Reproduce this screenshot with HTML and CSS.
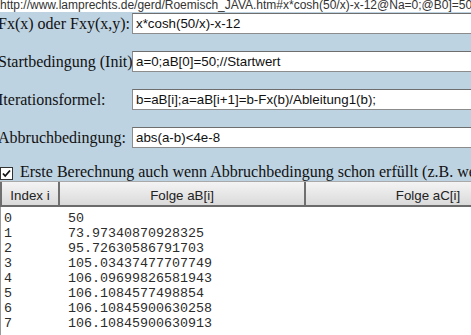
FILE: index.html
```html
<!DOCTYPE html>
<html>
<head>
<meta name="viewport" content="width=device-width, initial-scale=1">
<link rel="stylesheet" href="styles.css">
</head>
<body>
<div class="url">http://www.lamprechts.de/gerd/Roemisch_JAVA.htm#x*cosh(50/x)-x-12@Na=0;@B0]=50;@Iter</div>

<div class="panel">
  <div class="form">
    <label class="lbl">Fx(x) oder Fxy(x,y):</label>
    <input class="fld" type="text" value="x*cosh(50/x)-x-12">

    <label class="lbl">Startbedingung (Init)</label>
    <input class="fld" type="text" value="a=0;aB[0]=50;//Startwert">

    <label class="lbl">Iterationsformel:</label>
    <input class="fld" type="text" value="b=aB[i];a=aB[i+1]=b-Fx(b)/Ableitung1(b);">

    <label class="lbl">Abbruchbedingung:</label>
    <input class="fld" type="text" value="abs(a-b)<4e-8">
  </div>

  <div class="check">
    <span class="box">
      <svg width="13" height="13" viewBox="0 0 13 13">
        <rect x="0.5" y="0.5" width="12" height="12" fill="#fff" stroke="#333"/>
        <path d="M3 6.5 L5.2 9 L10 3.5" fill="none" stroke="#111" stroke-width="1.8"/>
      </svg>
    </span>
    <span class="ctext">Erste Berechnung auch wenn Abbruchbedingung schon erfüllt (z.B. wenn a=b)</span>
  </div>
</div>

<div class="result">
  <div class="head">
    <div class="th idx">Index i</div>
    <div class="th col">Folge aB[i]</div>
    <div class="th col">Folge aC[i]</div>
  </div>
<pre class="out">0	50
1	73.97340870928325
2	95.72630586791703
3	105.03437477707749
4	106.09699826581943
5	106.1084577498854
6	106.10845900630258
7	106.10845900630913</pre>
</div>
</body>
</html>
```

FILE: styles.css
```css
html, body {
  margin: 0;
  padding: 0;
  overflow: hidden;
  background: #fff;
}

.url {
  height: 12px;
  line-height: 10px;
  font-family: "Liberation Sans", Arial, sans-serif;
  font-size: 12px;
  color: #333;
  white-space: nowrap;
  overflow: hidden;
}

/* blauer Eingabebereich */
.panel {
  background: #bed3e2;
  padding-top: 1px;
}

.form {
  display: grid;
  grid-template-columns: 132px 420px;
  grid-auto-rows: 21px;
  row-gap: 17px;
}

.lbl {
  margin-left: -2px;
  font-family: "Liberation Serif", "Times New Roman", serif;
  font-size: 16px;
  line-height: 21px;
  color: #111;
  white-space: nowrap;
}

.fld {
  box-sizing: border-box;
  width: 420px;
  height: 21px;
  margin: 0;
  padding: 0 0 0 3px;
  border: 1px solid #8c8c8c;
  border-top-color: #6e6e6e;
  background: #fff;
  font-family: "Liberation Sans", Arial, sans-serif;
  font-size: 13.33px;
  color: #111;
  outline: none;
}

.check {
  display: flex;
  align-items: flex-start;
  height: 18px;
  margin-top: 15px;
  white-space: nowrap;
}

.box {
  display: block;
  width: 13px;
  height: 13px;
  margin-top: 4px;
}

.box svg {
  display: block;
}

.ctext {
  margin-left: 7px;
  font-family: "Liberation Serif", "Times New Roman", serif;
  font-size: 16px;
  line-height: 18px;
  color: #111;
}

/* Ergebnistabelle */
.head {
  display: flex;
  border-top: 1px solid #a9a9a9;
  border-bottom: 2px solid #6b6b6b;
  background: linear-gradient(#f4f4f4, #dadada);
  width: 560px;
}

.th {
  box-sizing: border-box;
  height: 23px;
  padding-top: 4px;
  line-height: 19px;
  border-left: 2px solid #6f6f6f;
  text-align: center;
  font-family: "Liberation Sans", Arial, sans-serif;
  font-size: 13.33px;
  color: #222;
  white-space: nowrap;
}

.idx {
  width: 58px;
}

.col {
  width: 246px;
}

.out {
  margin: 0;
  min-height: 140px;
  padding: 4px 0 0 3px;
  border-left: 1px solid #9a9a9a;
  font-family: "Liberation Mono", "Courier New", monospace;
  font-size: 13.33px;
  line-height: 15px;
  color: #2b2b2b;
  tab-size: 8;
}
```
